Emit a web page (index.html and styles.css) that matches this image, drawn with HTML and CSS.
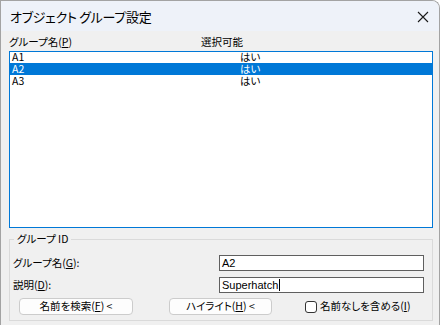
FILE: index.html
```html
<!DOCTYPE html>
<html lang="ja">
<head>
<meta charset="utf-8">
<link rel="stylesheet" href="styles.css">
</head>
<body>
<div class="window">
  <div class="titlebar">
    <span class="title">オブジェクト グループ設定</span>
    <svg class="close" width="12" height="12" viewBox="0 0 12 12"><path d="M1 1 L11 11 M11 1 L1 11" stroke="#1a1a1a" stroke-width="1.1" fill="none"/></svg>
  </div>
  <div class="content">
    <div class="list-head">
      <span class="col1">グループ名(<u>P</u>)</span>
      <span class="col2">選択可能</span>
    </div>
    <div class="listbox">
      <div class="row first"><span class="col1">A1</span><span class="col2">はい</span></div>
      <div class="row selected"><span class="col1">A2</span><span class="col2">はい</span></div>
      <div class="row"><span class="col1">A3</span><span class="col2">はい</span></div>
    </div>
    <div class="group">
      <span class="legend">グループ ID</span>
      <div class="field">
        <span class="flabel">グループ名(<u>G</u>):</span>
        <div class="input">A2</div>
      </div>
      <div class="field">
        <span class="flabel">説明(<u>D</u>):</span>
        <div class="input">Superhatch<span class="caret"></span></div>
      </div>
      <div class="actions">
        <div class="btn btn1">名前を検索(<u>F</u>) &lt;</div>
        <div class="btn btn2">ハイライト(<u>H</u>) &lt;</div>
        <label class="check"><span class="box"></span>名前なしを含める(<u>I</u>)</label>
      </div>
    </div>
  </div>
</div>
</body>
</html>
```

FILE: styles.css
```css
* { box-sizing: border-box; }
html, body { margin: 0; padding: 0; }
body {
  width: 440px;
  height: 325px;
  overflow: hidden;
  font-family: "Noto Sans CJK JP", "Noto Sans", sans-serif;
  font-feature-settings: "palt" 1;
  font-size: 10.5px;
  color: #000;
}
u { text-decoration: underline; text-underline-offset: 1px; }
.window {
  width: 440px;
  height: 325px;
  background: #f0f0f0;
  border: 1px solid #a3a3a3;
  border-bottom: none;
  border-top-right-radius: 8px;
  overflow: hidden;
  display: flex;
  flex-direction: column;
}
.titlebar {
  height: 30px;
  flex: none;
  background: #eef2f9;
  display: flex;
  align-items: center;
  justify-content: space-between;
  padding: 0 10px 0 9px;
}
.title {
  font-size: 13px;
  letter-spacing: -0.3px;
  line-height: 1;
  margin-top: 1px;
}
.close { margin-top: 1px; }
.content {
  padding: 0 6px 0 8px;
  display: flex;
  flex-direction: column;
}
.list-head {
  height: 20px;
  display: flex;
  align-items: center;
  line-height: 1;
  padding-top: 2px;
}
.list-head .col1 { width: 192px; flex: none; }
.listbox {
  height: 177px;
  border: 1px solid #0078d7;
  background: #fff;
}
.row {
  height: 12px;
  display: flex;
  align-items: center;
  line-height: 1;
  padding-left: 2px;
}
.row.first { height: 11px; }
.row .col1 { width: 228px; flex: none; }
.row.selected { background: #0078d7; color: #fff; }
.group {
  position: relative;
  margin-top: 11px;
  border: 1px solid #dadada;
  height: 82px;
  padding: 15px 8px 0 3px;
  display: flex;
  flex-direction: column;
}
.legend {
  position: absolute;
  top: -8px;
  left: 4px;
  padding: 0 3px;
  background: #f0f0f0;
  line-height: 14px;
}
.field {
  display: flex;
  align-items: center;
  height: 16px;
  margin-bottom: 6px;
}
.flabel { width: 206px; flex: none; line-height: 1; }
.input {
  flex: 1;
  height: 16px;
  border: 1px solid #5f5f5f;
  background: #fff;
  line-height: 14px;
  padding-left: 2px;
  font-family: "Liberation Sans", "Noto Sans CJK JP", sans-serif;
  font-size: 11px;
  display: flex;
  align-items: center;
}
.caret {
  display: inline-block;
  width: 1px;
  height: 12px;
  background: #000;
  margin-left: 1px;
}
.actions {
  display: flex;
  align-items: center;
  margin-top: -1px;
  padding-left: 6px;
}
.btn {
  height: 17px;
  border: 1px solid #cccccc;
  border-radius: 4px;
  background: #fdfdfd;
  display: flex;
  align-items: center;
  justify-content: center;
  line-height: 1;
}
.btn1 { width: 114px; }
.btn2 { width: 103px; margin-left: 36px; }
.check {
  display: flex;
  align-items: center;
  margin-left: 33px;
  line-height: 1;
}
.box {
  width: 12px;
  height: 12px;
  border: 1px solid #333;
  border-radius: 3px;
  background: #fff;
  margin-right: 3px;
}
```
